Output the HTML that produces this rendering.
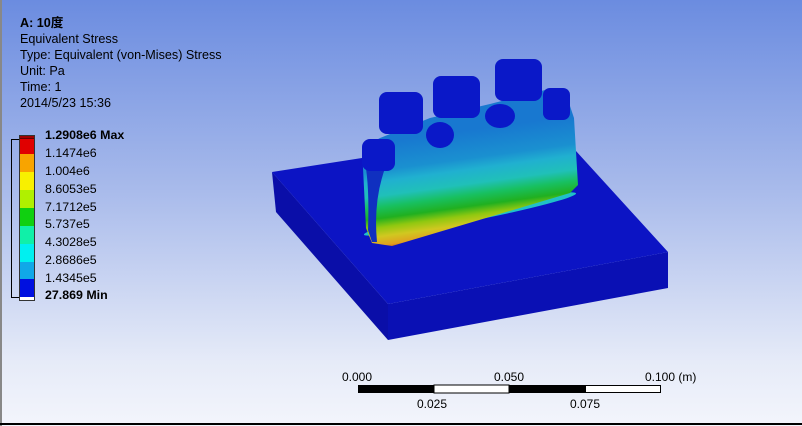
<!DOCTYPE html>
<html><head><meta charset="utf-8"><style>
html,body{margin:0;padding:0;}
body{width:802px;height:426px;position:relative;overflow:hidden;background:linear-gradient(#6b8ce0 0%,#a9bbeb 45%,#e6ebf8 85%,#f3f5fc 100%);font-family:"Liberation Sans","Noto Sans CJK SC",sans-serif;font-size:12.6px;color:#000;}
.t{position:absolute;left:20px;line-height:14px;white-space:nowrap;}
.l{position:absolute;left:45px;line-height:14px;white-space:nowrap;font-size:12.4px;}
.sw{position:absolute;left:20px;width:15px;}
.n{position:absolute;line-height:14px;font-size:12px;}
</style></head><body>
<div style="position:absolute;left:0;top:0;width:2px;height:426px;background:#888"></div>
<div style="position:absolute;left:0;top:423px;width:802px;height:2px;background:#000"></div>
<div class="t" style="top:16px;font-weight:bold">A: 10度</div>
<div class="t" style="top:32px">Equivalent Stress</div>
<div class="t" style="top:48px">Type: Equivalent (von-Mises) Stress</div>
<div class="t" style="top:64px">Unit: Pa</div>
<div class="t" style="top:80px">Time: 1</div>
<div class="t" style="top:96px">2014/5/23 15:36</div>

<div style="position:absolute;left:11px;top:139px;width:7px;height:157px;border:1px solid #000;border-right:none"></div>
<div class="sw" style="top:135px;height:3px;background:#a00000"></div>
<div class="sw" style="top:138px;height:16px;background:#e00000;border-top:1px solid #600"></div>
<div class="sw" style="top:154px;height:18px;background:#f8a400"></div>
<div class="sw" style="top:172px;height:18px;background:#f8f000"></div>
<div class="sw" style="top:190px;height:18px;background:#b0f000"></div>
<div class="sw" style="top:208px;height:18px;background:#10d010"></div>
<div class="sw" style="top:226px;height:18px;background:#10f0a8"></div>
<div class="sw" style="top:244px;height:18px;background:#00f0f0"></div>
<div class="sw" style="top:262px;height:17px;background:#10a8e8"></div>
<div class="sw" style="top:279px;height:18px;background:#0010e0"></div>
<div class="sw" style="top:297px;height:4px;background:#fff;border:0"></div>
<div style="position:absolute;left:19px;top:135px;width:16px;height:166px;border:1px solid #333;box-sizing:border-box;pointer-events:none"></div>

<div class="l" style="top:128px;font-weight:bold">1.2908e6 Max</div>
<div class="l" style="top:146px">1.1474e6</div>
<div class="l" style="top:164px">1.004e6</div>
<div class="l" style="top:182px">8.6053e5</div>
<div class="l" style="top:200px">7.1712e5</div>
<div class="l" style="top:217px">5.737e5</div>
<div class="l" style="top:235px">4.3028e5</div>
<div class="l" style="top:253px">2.8686e5</div>
<div class="l" style="top:271px">1.4345e5</div>
<div class="l" style="top:288px;font-weight:bold">27.869 Min</div>

<svg width="802" height="426" style="position:absolute;left:0;top:0">
<defs>
<linearGradient id="g" gradientUnits="userSpaceOnUse" x1="470" y1="130" x2="485" y2="240">
<stop offset="0" stop-color="#1878d0"/>
<stop offset="0.25" stop-color="#1a90d0"/>
<stop offset="0.35" stop-color="#20b0d0"/>
<stop offset="0.48" stop-color="#20c0b8"/>
<stop offset="0.58" stop-color="#18c060"/>
<stop offset="0.68" stop-color="#20b020"/>
<stop offset="0.76" stop-color="#90c810"/>
<stop offset="0.84" stop-color="#d0c820"/>
<stop offset="0.92" stop-color="#e0a020"/>
<stop offset="0.96" stop-color="#c05010"/>
<stop offset="1" stop-color="#20b0c8"/>
</linearGradient>
</defs>
<!-- plate -->
<polygon points="272,172 388,304 388,340 276,212" fill="#0a0ea8"/>
<polygon points="388,304 668,252 668,288 388,340" fill="#0a10b4"/>
<polygon points="272,172 555,128 668,252 388,304" fill="#0c14c4"/>
<!-- glow at foot -->
<ellipse cx="470" cy="214" rx="108" ry="7" transform="rotate(-11 470 214)" fill="#20c0c8"/>
<!-- body -->
<polygon points="362,148 380,138 430,118 490,104 545,90 566,94 574,118 578,185 570,193 392,246 372,243 366,228" fill="url(#g)"/>
<path d="M362,150 Q370,175 368,230 L372,242 L377,242 Q372,190 393,150 Z" fill="#1030c0"/>
<!-- blocks -->
<rect x="379" y="92" width="44" height="42" rx="8" fill="#0a18c8"/>
<rect x="433" y="76" width="47" height="42" rx="8" fill="#0a18c8"/>
<rect x="495" y="59" width="47" height="42" rx="8" fill="#0a18c8"/>
<rect x="543" y="88" width="27" height="32" rx="7" fill="#0a18c8"/>
<rect x="362" y="139" width="33" height="32" rx="8" fill="#0a18c8"/>
<ellipse cx="440" cy="135" rx="14" ry="13" fill="#0a18c8"/>
<ellipse cx="500" cy="116" rx="15" ry="12" fill="#0a18c8"/>
<!-- scale bar -->
<rect x="358" y="385" width="76" height="8" fill="#000"/>
<rect x="434" y="385" width="75" height="8" fill="#fff" stroke="#000" stroke-width="1"/>
<rect x="509" y="385" width="76" height="8" fill="#000"/>
<rect x="585.5" y="385.5" width="75" height="7" fill="#fff" stroke="#000" stroke-width="1"/>
</svg>
<div class="n" style="left:342px;top:370px">0.000</div>
<div class="n" style="left:494px;top:370px">0.050</div>
<div class="n" style="left:645px;top:370px">0.100 (m)</div>
<div class="n" style="left:417px;top:397px">0.025</div>
<div class="n" style="left:570px;top:397px">0.075</div>
</body></html>
